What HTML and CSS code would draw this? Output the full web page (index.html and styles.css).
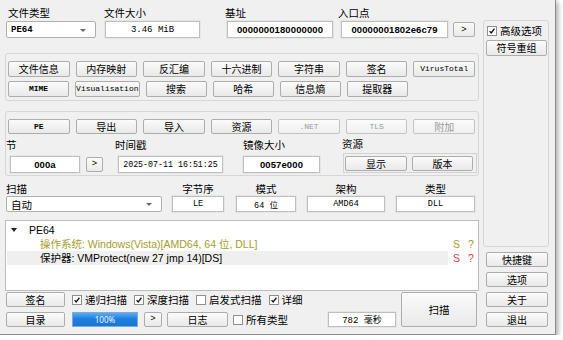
FILE: index.html
```html
<!DOCTYPE html>
<html lang="zh">
<head>
<meta charset="utf-8">
<title>Detect It Easy</title>
<link rel="stylesheet" href="styles.css">
</head>
<body>
<div class="window">
  <div class="main">
    <div class="top">
      <div class="grp g-type"><div class="lbl">文件类型</div><div class="combo mono b">PE64<span class="arrow"></span></div></div>
      <div class="grp g-size"><div class="lbl">文件大小</div><div class="edit mono">3.46 MiB</div></div>
      <div class="grp g-base"><div class="lbl">基址</div><div class="edit hex">0000000180000000</div></div>
      <div class="grp g-entry"><div class="lbl">入口点</div><div class="edit hex">00000001802e6c79</div></div>
      <button class="btn go mono">&gt;</button>
    </div>

    <div class="frame tools">
      <div class="btngrid">
        <button class="btn">文件信息</button>
        <button class="btn">内存映射</button>
        <button class="btn">反汇编</button>
        <button class="btn">十六进制</button>
        <button class="btn">字符串</button>
        <button class="btn">签名</button>
        <button class="btn mono sm">VirusTotal</button>
      </div>
      <div class="btngrid">
        <button class="btn mono sm b">MIME</button>
        <button class="btn mono sm">Visualisation</button>
        <button class="btn">搜索</button>
        <button class="btn">哈希</button>
        <button class="btn">信息熵</button>
        <button class="btn">提取器</button>
      </div>
    </div>

    <div class="frame pe">
      <div class="btngrid">
        <button class="btn mono sm b h15">PE</button>
        <button class="btn h15">导出</button>
        <button class="btn h15">导入</button>
        <button class="btn h15">资源</button>
        <button class="btn mono sm h15 dis">.NET</button>
        <button class="btn mono sm h15 dis">TLS</button>
        <button class="btn h15 dis">附加</button>
      </div>
      <div class="info">
        <div class="grp g-sec">
          <div class="lbl">节</div>
          <div class="ctl-row">
            <div class="edit hex f-sec">000a</div>
            <button class="btn mini mono">&gt;</button>
          </div>
        </div>
        <div class="grp g-time">
          <div class="lbl">时间戳</div>
          <div class="edit mono f-time">2025-07-11 16:51:25</div>
        </div>
        <div class="grp g-img">
          <div class="lbl">镜像大小</div>
          <div class="edit hex f-img">0057e000</div>
        </div>
        <div class="grp g-res">
          <div class="lbl">资源</div>
          <div class="resbox">
            <button class="btn h15 r1">显示</button>
            <button class="btn h15 r2">版本</button>
          </div>
        </div>
      </div>
    </div>

    <div class="scanrow">
      <div class="grp g-scan"><div class="lbl">扫描</div><div class="combo cjk">自动<span class="arrow"></span></div></div>
      <div class="grp g-order c"><div class="lbl">字节序</div><div class="edit mono b16">LE</div></div>
      <div class="grp g-mode c"><div class="lbl">模式</div><div class="edit mono b16">64 位</div></div>
      <div class="grp g-arch c"><div class="lbl">架构</div><div class="edit mono b16">AMD64</div></div>
      <div class="grp g-kind c"><div class="lbl">类型</div><div class="edit mono b16">DLL</div></div>
    </div>

    <div class="tree">
      <div class="trow root"><span class="tri"></span><span class="tname">PE64</span></div>
      <div class="trow">
        <span class="tcell olive">操作系统: Windows(Vista)[AMD64, 64 位, DLL]</span>
        <span class="ts olive">S</span><span class="tq olive">?</span>
      </div>
      <div class="trow">
        <span class="tcell sel">保护器: VMProtect(new 27 jmp 14)[DS]</span>
        <span class="ts red">S</span><span class="tq red">?</span>
      </div>
    </div>

    <div class="bottom">
      <div class="bleft">
        <div class="brow">
          <button class="btn bb">签名</button>
          <label class="chk c1"><span class="box on"><svg viewBox="0 0 10 10"><path d="M2 5.2 L4 7.5 L8 2.2" /></svg></span>递归扫描</label>
          <label class="chk"><span class="box on"><svg viewBox="0 0 10 10"><path d="M2 5.2 L4 7.5 L8 2.2" /></svg></span>深度扫描</label>
          <label class="chk"><span class="box"></span>启发式扫描</label>
          <label class="chk"><span class="box on"><svg viewBox="0 0 10 10"><path d="M2 5.2 L4 7.5 L8 2.2" /></svg></span>详细</label>
        </div>
        <div class="brow">
          <button class="btn bb">目录</button>
          <div class="progress">100%</div>
          <button class="btn arrowbtn mono">&gt;</button>
          <button class="btn logbtn">日志</button>
          <label class="chk c5"><span class="box"></span>所有类型</label>
          <div class="edit mono ms">782 毫秒</div>
        </div>
      </div>
      <button class="btn scan">扫描</button>
    </div>
  </div>

  <div class="side">
    <div class="frame sideframe">
      <label class="chk adv"><span class="box on"><svg viewBox="0 0 10 10"><path d="M2 5.2 L4 7.5 L8 2.2" /></svg></span>高级选项</label>
      <button class="btn sym">符号重组</button>
    </div>
    <button class="btn sbtn first">快捷键</button>
    <button class="btn sbtn">选项</button>
    <button class="btn sbtn">关于</button>
    <button class="btn sbtn">退出</button>
  </div>
</div>
</body>
</html>
```

FILE: styles.css
```css
* { box-sizing: border-box; }

body {
  margin: 0;
  background: #ffffff;
  font-family: "Noto Sans CJK SC", "Noto Sans", sans-serif;
  font-size: 11px;
  color: #000;
}

.window {
  width: 556px;
  height: 335px;
  background: #f0f0f0;
  border-right: 1px solid #8c8c8c;
  border-bottom: 1px solid #8c8c8c;
  box-shadow: 2px 2px 5px rgba(0, 0, 0, 0.35);
  display: flex;
}

.main {
  width: 474px;
  margin-left: 5px;
  display: flex;
  flex-direction: column;
}

.side {
  width: 66px;
  margin-left: 4px;
  display: flex;
  flex-direction: column;
}

/* generic pieces */
.grp { display: flex; flex-direction: column; }
.grp.c .lbl { text-align: center; }

.lbl {
  height: 13px;
  line-height: 13px;
  font-size: 10.5px;
  white-space: nowrap;
}

.mono { font-family: "Liberation Mono", "DejaVu Sans Mono", "Noto Sans CJK SC", monospace; font-size: 9px; }
.hex { font-family: "Liberation Sans", "Noto Sans CJK SC", sans-serif; font-weight: bold; font-size: 9.5px; letter-spacing: 0.1px; }
.b { font-weight: bold; }
.sm { font-size: 8px; }

.edit {
  height: 17px;
  background: #fff;
  border: 1px solid #bfbfbf;
  box-shadow: 0 0 0 1px #e6e6e6;
  display: flex;
  align-items: center;
  justify-content: center;
  white-space: nowrap;
}

.combo {
  position: relative;
  height: 17px;
  background: #fff;
  border: 1px solid #b0b0b0;
  border-radius: 2px;
  display: flex;
  align-items: center;
  padding-left: 4px;
}
.combo.cjk { font-size: 10.5px; height: 16px; }
.arrow {
  position: absolute;
  right: 9px;
  top: 50%;
  margin-top: -1px;
  width: 0;
  height: 0;
  border-left: 3px solid transparent;
  border-right: 3px solid transparent;
  border-top: 3px solid #6a6a6a;
}

.btn {
  height: 16px;
  padding: 0;
  margin: 0;
  font-family: "Noto Sans CJK SC", "Noto Sans", sans-serif;
  font-size: 10px;
  line-height: 14px;
  color: #000;
  border: 1px solid #adadad;
  border-radius: 2px;
  background: linear-gradient(#fbfbfb, #e9e9e9);
  white-space: nowrap;
}
.btn.mono { font-family: "Liberation Mono", "DejaVu Sans Mono", monospace; }
.btn.sm { font-size: 8px; }
.btn.h15 { height: 15px; line-height: 13px; }
.btn.dis { color: #9a9a9a; border-color: #c4c4c4; background: linear-gradient(#fbfbfb, #f0f0f0); }

.frame {
  border: 1px solid #d6d6d6;
  border-radius: 3px;
}

/* top row */
.top {
  display: flex;
  align-items: flex-end;
  padding-top: 6px;
}
.top .grp .lbl + * { margin-top: 2px; }
.g-type { margin-left: 1px; width: 90px; }
.g-type .lbl { padding-left: 2px; }
.g-size { margin-left: 9px; width: 95px; }
.g-size .lbl { margin-left: -1px; }
.g-base { margin-left: 27px; width: 106px; }
.g-base .lbl { margin-left: -2px; }
.g-entry { margin-left: 8px; width: 107px; }
.g-entry .lbl { margin-left: -3px; }
.go { margin-left: 5px; width: 22px; height: 15px; margin-bottom: 1px; font-size: 9px; }

/* button grids */
.btngrid {
  display: grid;
  grid-template-columns: repeat(7, 1fr);
  column-gap: 6px;
}

.tools {
  margin-top: 15px;
  padding: 7px 3px 3px 2px;
}
.tools .btngrid + .btngrid { margin-top: 4px; }

.pe {
  margin-top: 10px;
  padding: 7px 3px 2px 2px;
}

.info {
  display: flex;
  align-items: flex-end;
  margin-top: 3px;
  margin-left: -2px;
}
.ctl-row { display: flex; align-items: center; margin-top: 5px; }
.g-sec { width: 97px; }
.f-sec { margin-left: 4px; width: 70px; }
.mini { margin-left: 6px; width: 17px; height: 15px; line-height: 13px; font-size: 9px; }
.g-time { margin-left: 12px; }
.f-time { margin-top: 5px; margin-left: 3px; width: 105px; font-size: 8.3px; }
.g-img { margin-left: 20px; }
.f-img { margin-top: 5px; width: 77px; }
.g-res { margin-left: 22px; }
.resbox {
  margin-top: 3px;
  margin-left: 1px;
  width: 134px;
  height: 20px;
  border: 1px solid #d2d2d2;
  padding: 2px 0 0 1px;
  display: flex;
}
.r1 { width: 62px; }
.r2 { width: 61px; margin-left: 5px; }

/* scan row */
.scanrow {
  display: flex;
  align-items: flex-end;
  margin-top: 6px;
}
.scanrow .grp .lbl + * { margin-top: 1px; }
.b16 { height: 16px; }
.g-scan { margin-left: 1px; width: 156px; }
.g-order { margin-left: 10px; width: 52px; }
.g-mode { margin-left: 12px; width: 60px; }
.g-mode .edit { font-family: "Liberation Mono", "Noto Sans CJK SC", monospace; font-size: 9px; }
.g-arch { margin-left: 11px; width: 78px; }
.g-kind { margin-left: 11px; width: 79px; }
.scanrow .edit { font-size: 8.5px; }

/* tree */
.tree {
  margin-top: 8px;
  height: 71px;
  background: #fff;
  border: 1px solid #bdbdbd;
  padding-top: 2px;
  font-family: "Liberation Sans", "Noto Sans CJK SC", sans-serif;
  font-size: 10.5px;
}
.trow {
  display: flex;
  align-items: center;
  height: 14px;
  white-space: nowrap;
}
.tri {
  margin-left: 5px;
  width: 0;
  height: 0;
  border-left: 3.5px solid transparent;
  border-right: 3.5px solid transparent;
  border-top: 4px solid #222;
}
.tname { margin-left: 12px; }
.tcell {
  margin-left: 1px;
  width: 442px;
  height: 14px;
  line-height: 14px;
  padding-left: 33px;
}
.tcell.sel { background: #efefef; }
.ts { margin-left: 5px; width: 15px; }
.tq { width: 10px; }
.olive { color: #a69c2c; }
.red { color: #e8403c; }

/* bottom */
.bottom {
  display: flex;
  margin-top: 1px;
}
.bleft {
  width: 391px;
  display: flex;
  flex-direction: column;
  row-gap: 5px;
}
.brow {
  display: flex;
  align-items: center;
  height: 15px;
}
.bb { margin-left: 1px; width: 59px; height: 15px; line-height: 13px; }

.chk {
  display: flex;
  align-items: center;
  column-gap: 3px;
  margin-left: 7px;
  font-size: 10.5px;
  white-space: nowrap;
}
.box {
  width: 10px;
  height: 10px;
  background: #fff;
  border: 1px solid #8e8f8f;
  display: flex;
  align-items: center;
  justify-content: center;
}
.box svg { width: 8px; height: 8px; }
.box svg path { fill: none; stroke: #111; stroke-width: 1.6; }

.progress {
  margin-left: 7px;
  width: 66px;
  height: 15px;
  border: 1px solid #7fa9d6;
  background: linear-gradient(#58acf4, #1f7fde 45%, #1a74d4);
  color: #eef6ff;
  font-family: "Noto Sans", sans-serif;
  font-size: 8px;
  display: flex;
  align-items: center;
  justify-content: center;
}
.arrowbtn { margin-left: 6px; width: 18px; height: 15px; line-height: 13px; font-size: 9px; }
.logbtn { margin-left: 5px; width: 61px; height: 15px; line-height: 13px; }
.c5 { margin-left: 5px; }
.ms { margin-left: auto; width: 68px; height: 15px; font-family: "Liberation Mono", "Noto Sans CJK SC", monospace; font-size: 9px; }

.scan {
  margin-left: 5px;
  width: 76px;
  height: 35px;
  font-size: 10.5px;
}

/* side */
.sideframe {
  margin-top: 20px;
  height: 227px;
  padding: 2px 0 0 3px;
}
.chk.adv { margin-left: 0; height: 15px; }
.sym { margin-top: 2px; margin-left: -1px; width: 61px; }
.sbtn { margin-left: 3px; width: 62px; height: 15px; line-height: 13px; margin-top: 5px; }
```
